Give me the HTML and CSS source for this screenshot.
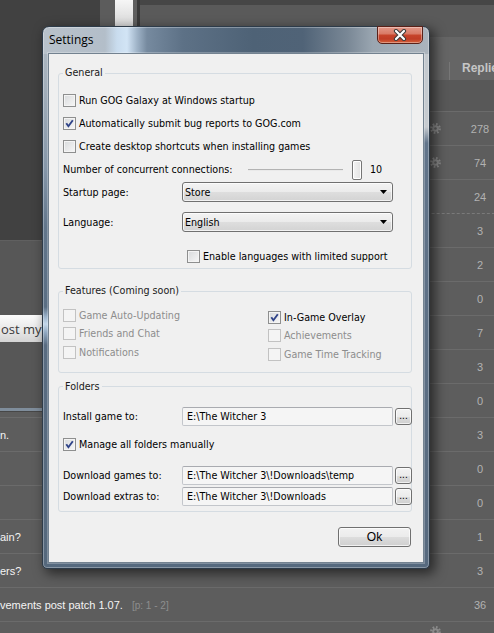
FILE: index.html
```
<!DOCTYPE html>
<html>
<head>
<meta charset="utf-8">
<title>Settings</title>
<link rel="stylesheet" href="styles.css">
</head>
<body>
<div class="page">
  <div class="bg">
    <aside class="side">
      <div class="side-top">
        <div class="side-dark"></div>
        <div class="side-tabs"><div class="tab-a"></div><div class="tab-b"></div><div class="tab-c"></div><div class="tab-d"></div></div>
      </div>
      <div class="side-mid"><button class="post">ost my</button></div>
      <div class="side-bar"></div>
    </aside>
    <div class="band1"></div>
    <div class="band2"></div>
    <div class="head"><div class="head-cell">Replies</div></div>
    <div class="sub"></div>

    <div class="trow"><span class="gear"><svg viewBox="0 0 12 12" width="11" height="11"><circle cx="6" cy="6" r="4.6" fill="none" stroke="#8a8a8a" stroke-width="2.6" stroke-dasharray="1.8 1.8"/><circle cx="6" cy="6" r="3.6" fill="#8a8a8a"/><circle cx="6" cy="6" r="1.4" fill="#5d5d5d"/></svg></span><span class="num">278</span></div>
    <div class="trow"><span class="gear"><svg viewBox="0 0 12 12" width="11" height="11"><circle cx="6" cy="6" r="4.6" fill="none" stroke="#8a8a8a" stroke-width="2.6" stroke-dasharray="1.8 1.8"/><circle cx="6" cy="6" r="3.6" fill="#8a8a8a"/><circle cx="6" cy="6" r="1.4" fill="#5d5d5d"/></svg></span><span class="num">74</span></div>
    <div class="trow"><span class="num">24</span></div>
    <div class="trow dash"><span class="num">3</span></div>
    <div class="trow"><span class="num">2</span></div>
    <div class="trow"><span class="num">0</span></div>
    <div class="trow"><span class="num">7</span></div>
    <div class="trow"><span class="num">3</span></div>
    <div class="trow"><span class="num">0</span></div>
    <div class="trow full"><span class="ttl">n.</span><span class="num">3</span></div>
    <div class="trow full"><span class="num">0</span></div>
    <div class="trow full"><span class="num">0</span></div>
    <div class="trow full"><span class="ttl">ain?</span><span class="num">1</span></div>
    <div class="trow full"><span class="ttl">ers?</span><span class="num">3</span></div>
    <div class="trow full"><span class="ttl">vements post patch 1.07. <span class="pg">[p: 1 - 2]</span></span><span class="num">36</span></div>
    <div class="trow full last"><span class="gear"><svg viewBox="0 0 12 12" width="11" height="11"><circle cx="6" cy="6" r="4.6" fill="none" stroke="#8a8a8a" stroke-width="2.6" stroke-dasharray="1.8 1.8"/><circle cx="6" cy="6" r="3.6" fill="#8a8a8a"/><circle cx="6" cy="6" r="1.4" fill="#5d5d5d"/></svg></span><span class="num"></span></div>
  </div>

  <div class="window">
    <div class="titlebar">
      <span class="title">Settings</span>
      <button class="close"><svg viewBox="0 0 16 12" width="16" height="12"><path d="M4 2 L12 10 M12 2 L4 10" stroke="#3b3b3b" stroke-width="4.2" stroke-linecap="round" fill="none"/><path d="M4 2 L12 10 M12 2 L4 10" stroke="#ffffff" stroke-width="2.2" stroke-linecap="round" fill="none"/></svg></button>
    </div>
    <div class="client">
      <fieldset class="group general">
        <legend>General</legend>
        <div class="row"><span class="cb"></span><span>Run GOG Galaxy at Windows startup</span></div>
        <div class="row"><span class="cb on"><svg viewBox="0 0 11 11" width="11" height="11"><path d="M2.3 5.3 L4.4 8.2 L8.8 2.2" fill="none" stroke="#2f4388" stroke-width="1.9"/></svg></span><span>Automatically submit bug reports to GOG.com</span></div>
        <div class="row"><span class="cb"></span><span>Create desktop shortcuts when installing games</span></div>
        <div class="row"><span class="lbl-wide">Number of concurrent connections:</span><span class="slider"><span class="track"></span><span class="thumb"></span></span><span class="val">10</span></div>
        <div class="row sel first"><span class="lbl">Startup page:</span><span class="select">Store<svg class="arrow" viewBox="0 0 7 4" width="7" height="4"><path d="M0 0 H7 L3.5 4 Z" fill="#000"/></svg></span></div>
        <div class="row sel second"><span class="lbl">Language:</span><span class="select">English<svg class="arrow" viewBox="0 0 7 4" width="7" height="4"><path d="M0 0 H7 L3.5 4 Z" fill="#000"/></svg></span></div>
        <div class="row enable"><span class="cb"></span><span>Enable languages with limited support</span></div>
      </fieldset>

      <fieldset class="group features">
        <legend>Features (Coming soon)</legend>
        <div class="cols">
          <div class="col-left">
            <div class="frow off"><span class="cb"></span><span>Game Auto-Updating</span></div>
            <div class="frow off"><span class="cb"></span><span>Friends and Chat</span></div>
            <div class="frow off"><span class="cb"></span><span>Notifications</span></div>
          </div>
          <div class="col-right">
            <div class="frow"><span class="cb on"><svg viewBox="0 0 11 11" width="11" height="11"><path d="M2.3 5.3 L4.4 8.2 L8.8 2.2" fill="none" stroke="#2f4388" stroke-width="1.9"/></svg></span><span>In-Game Overlay</span></div>
            <div class="frow off"><span class="cb"></span><span>Achievements</span></div>
            <div class="frow off"><span class="cb"></span><span>Game Time Tracking</span></div>
          </div>
        </div>
      </fieldset>

      <fieldset class="group folders">
        <legend>Folders</legend>
        <div class="prow install"><span class="lbl">Install game to:</span><span class="path">E:\The Witcher 3</span><button class="browse">...</button></div>
        <div class="row manage"><span class="cb on"><svg viewBox="0 0 11 11" width="11" height="11"><path d="M2.3 5.3 L4.4 8.2 L8.8 2.2" fill="none" stroke="#2f4388" stroke-width="1.9"/></svg></span><span>Manage all folders manually</span></div>
        <div class="prow dl-games"><span class="lbl">Download games to:</span><span class="path">E:\The Witcher 3\!Downloads\temp</span><button class="browse">...</button></div>
        <div class="prow dl-extras"><span class="lbl">Download extras to:</span><span class="path">E:\The Witcher 3\!Downloads</span><button class="browse">...</button></div>
      </fieldset>

      <div class="footer"><button class="ok">Ok</button></div>
    </div>
  </div>
</div>
</body>
</html>
```

FILE: styles.css
```
* { box-sizing: border-box; }
body { margin: 0; background: #5e5e5e; }

.page {
  position: relative;
  width: 494px;
  height: 633px;
  overflow: hidden;
  font-family: "Liberation Sans", Arial, sans-serif;
}

/* ---------- background web page ---------- */
.bg {
  display: grid;
  grid-template-columns: 140px 370px;
  grid-template-rows: 5px 32px 43px 31px repeat(16, 34px);
  width: 510px;
  background: #5e5e5e;
}
.side { grid-column: 1; grid-row: 1 / 14; display: flex; flex-direction: column; background: #5d5d5d; }
.side-top { display: flex; height: 240px; }
.side-dark { width: 100px; background: #414141; }
.side-tabs { display: flex; width: 40px; background: #5c5c5c; }
.tab-a { width: 15px; }
.tab-b { width: 18px; background: linear-gradient(#f6f6f6, #d4d4d4 28px, #c4c4c4); }
.tab-c { width: 4px; background: #5f5f5f; }
.tab-d { width: 3px; background: #3a3a3a; }
.side-mid { height: 168px; background: #575757; border-top: 1px solid #606060; padding-top: 74px; }
.post {
  display: block; width: 80px; height: 27px; border: none; border-radius: 0 3px 3px 0;
  background: linear-gradient(#fbfbfb, #e6e6e6 60%, #d4d4d4);
  font-family: "Open Sans", sans-serif; font-size: 13px; color: #3a3a3a;
  text-align: left; padding: 0 0 0 1px;
}
.side-bar { height: 4px; background: #7f8d9b; border-bottom: 1px solid #474747; }

.band1 { grid-column: 2; grid-row: 1; background: #464646; }
.band2 { grid-column: 2; grid-row: 2; background: #5a5a5a; }
.head { grid-column: 2; grid-row: 3; background: #656565; display: flex; justify-content: flex-end; }
.head-cell {
  width: 61px; margin-top: 25px; height: 18px; border-left: 1px solid #777;
  padding-left: 12px; font-size: 12px; line-height: 12px; font-weight: bold; color: #c6c6c6;
  white-space: nowrap;
}
.sub { grid-column: 2; grid-row: 4; background: #585858; }

.trow {
  grid-column: 2; display: flex; align-items: center; justify-content: flex-end;
  border-top: 1px solid #6b6b6b; background: #5d5d5d;
}
.trow.dash { border-top: 1px dashed #7a7a7a; }
.trow.full { grid-column: 1 / -1; }
.trow.last { align-items: flex-start; }
.trow.last .gear { margin-top: 4px; }
.ttl { margin-right: auto; font-size: 11px; color: #f4f4f4; white-space: nowrap; }
.pg { color: #8e8e8e; font-size: 10px; margin-left: 6px; }
.gear { width: 11px; height: 11px; margin-right: 9px; display: flex; }
.num { width: 60px; text-align: center; font-size: 11px; color: #b2b2b2; }

/* ---------- dialog window ---------- */
.window {
  position: absolute; left: 42px; top: 26px; width: 388px; height: 543px;
  border: 1px solid #2d3b49; border-radius: 7px 7px 5px 5px;
  padding: 0 5px 5px;
  display: flex; flex-direction: column;
  background:
    linear-gradient(90deg, #b8c1ca 0, #b3bec9 62px, #c9dcee 74px, #d2e4f5 84px, #a0b4c8 94px, #768a9f 104px, #5d7186 140px, #4e6276 210px, #506377 260px, #7a8896 305px, #9aa6b1 330px, #abb4bd 386px) 0 0 / 100% 27px no-repeat,
    linear-gradient(#b0bac4 0, #a2aeba 60px, #8697a9 140px, #62768b 200px, #5a6e83 280px, #9cb4cc 290px, #c4d7ea 297px, #8ea6be 306px, #596c81 318px, #55687c 100%) 0 0 / 6px 100% no-repeat,
    linear-gradient(#c2c8ce 0, #c6cbd0 100px, #61748a 116px, #56697e 100%) 100% 0 / 6px 100% no-repeat,
    #566a7f;
  box-shadow: 4px 4px 12px 1px rgba(0,0,0,.55), inset 0 0 0 1px rgba(255,255,255,.3);
}
.titlebar { height: 26px; display: flex; align-items: center; padding-left: 1px; }
.title { font-family: "Open Sans", "Noto Sans", sans-serif; font-size: 12px; color: #000; margin-top: -1px; }
.close {
  align-self: flex-start; margin: -1px 1px 0 auto;
  width: 46px; height: 18px; padding: 0;
  border: 1px solid #5a2118; border-radius: 0 0 5px 5px;
  background: linear-gradient(#e39888 0, #d97a66 42%, #c6432a 52%, #bf3c25 75%, #d5623b 100%);
  box-shadow: inset 0 0 0 1px rgba(255,255,255,.35);
  display: flex; align-items: center; justify-content: center;
}
.close svg { display: block; }

.client {
  flex: 1;
  background: #f0f0f0;
  border: 1px solid #738290;
  box-shadow: 0 0 0 1px rgba(255,255,255,.25);
  padding: 12px 11px 0 9px;
  font-family: "DejaVu Sans Condensed", "Liberation Sans", sans-serif;
  font-size: 10.65px; color: #000;
}

.group {
  margin: 0; min-width: 0;
  border: 1px solid #d5dce2; border-radius: 3px;
  padding: 9px 0 2px 4px;
}
.group legend { padding: 0 2px; line-height: 14px; color: #1a1a1a; }
.features { margin-top: 15px; padding: 8px 0 8px 4px; }
.folders { margin-top: 7px; padding: 13px 0 5px 4px; }

.row { display: flex; align-items: center; height: 23px; white-space: nowrap; }
.row.sel { height: 20px; }
.row.first { margin-top: 1px; }
.row.second { margin-top: 10px; }
.row.enable { margin-top: 14px; height: 20px; padding-left: 124px; }

.cb {
  flex: none; width: 13px; height: 13px; margin-right: 3px;
  border: 1px solid #8e8f8f;
  background: linear-gradient(135deg, #d8dadc, #f7f7f7);
  box-shadow: inset 0 0 0 1px #f4f4f4;
  display: inline-flex; align-items: center; justify-content: center;
}
.cb svg { display: block; }

.lbl-wide { width: 185px; flex: none; }
.lbl { width: 119px; flex: none; }
.slider { position: relative; width: 114px; height: 20px; display: flex; align-items: center; flex: none; }
.track { flex: 1; height: 2px; border-top: 1px solid #b3b3b3; border-bottom: 1px solid #e9e9e9; margin-right: 9px; }
.thumb {
  width: 10px; height: 20px; border: 1px solid #767676; border-radius: 2px;
  background: linear-gradient(90deg, #f3f3f3, #e2e2e2);
  box-shadow: inset 0 0 0 1px #fff;
}
.val { margin-left: 8px; }

.select {
  flex: none; width: 211px; height: 20px;
  border: 1px solid #707070; border-radius: 3px;
  background: linear-gradient(#f3f3f3 0, #ebebeb 50%, #dedede 51%, #d3d3d3 100%);
  box-shadow: inset 0 0 0 1px rgba(255,255,255,.7);
  display: flex; align-items: center; padding-left: 2px;
}
.select .arrow { margin-left: auto; margin-right: 5px; display: block; }

.cols { display: flex; }
.col-left { width: 205px; flex: none; }
.col-right { padding-top: 2px; }
.frow { display: flex; align-items: center; height: 18.5px; white-space: nowrap; }
.frow.off { color: #8d8d8d; }
.frow.off .cb { border-color: #c2c2c2; background: #f4f4f4; box-shadow: none; }

.prow { display: flex; align-items: center; height: 19px; white-space: nowrap; }
.path {
  flex: none; width: 211px; height: 19px;
  border: 1px solid #c3c6cb; border-top-color: #a9abb0; border-radius: 2px;
  background: #f5f5f5;
  display: flex; align-items: center; padding-left: 4px;
}
.browse {
  flex: none; width: 17px; height: 17px; margin-left: 2px; padding: 0;
  border: 1px solid #707070; border-radius: 3px;
  background: linear-gradient(#f3f3f3 0, #ebebeb 50%, #dddddd 51%, #cfcfcf 100%);
  box-shadow: inset 0 0 0 1px rgba(255,255,255,.7);
  font-family: "Liberation Sans", sans-serif; font-size: 10px; line-height: 12px; color: #000;
}
.row.manage { margin-top: 9px; height: 20px; }
.prow.dl-games { margin-top: 11px; }
.prow.dl-extras { margin-top: 2px; }

.footer { display: flex; justify-content: flex-end; margin-top: 15px; padding-right: 1px; }
.ok {
  width: 73px; height: 20px; padding: 0;
  border: 1px solid #707070; border-radius: 3px;
  background: linear-gradient(#f2f2f2 0, #ebebeb 50%, #dddddd 51%, #cfcfcf 100%);
  box-shadow: inset 0 0 0 1px rgba(255,255,255,.7);
  font-family: "Liberation Sans", sans-serif; font-size: 12px; color: #000;
}
```
